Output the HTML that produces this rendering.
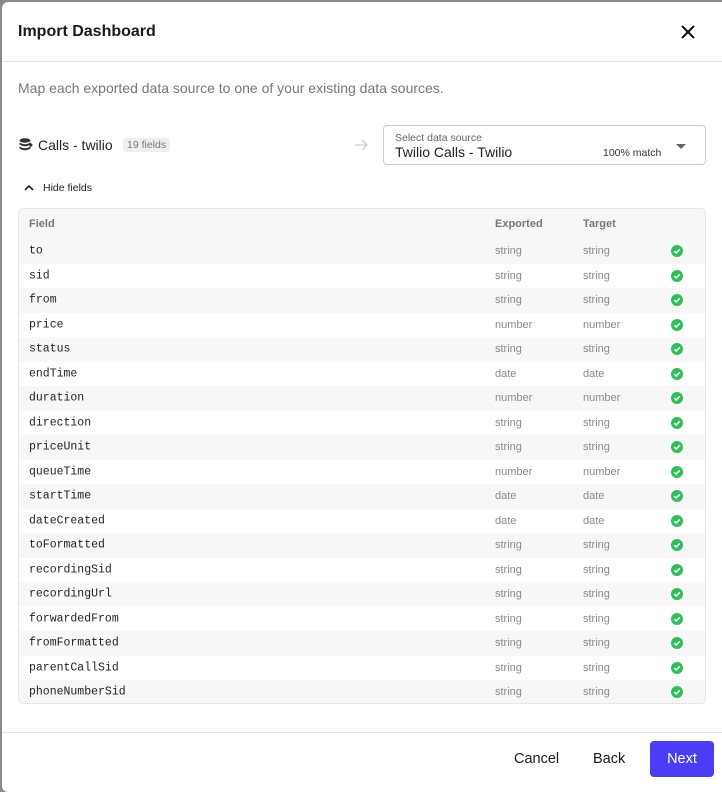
<!DOCTYPE html>
<html><head><style>
*{box-sizing:border-box;margin:0;padding:0}
body{width:722px;height:785px;background:#8a8a8a;font-family:"Liberation Sans",sans-serif;overflow:hidden;position:relative}
.modal{position:absolute;left:2px;top:2px;width:730px;height:790px;background:#fff;border-radius:6px}
.abs{position:absolute}
.tbl{position:absolute;left:16px;top:206px;width:688px;height:496px;background:#f7f7f8;border:1px solid #e6e6e9;border-radius:5px;overflow:hidden}
.row{height:24.5px;position:relative;font-size:11px;color:#8a8a8f}
.row.w{background:#fff}
.row span{position:absolute;top:50%;transform:translateY(-50%)}
.row .f{left:10px;color:#222;font-family:"Liberation Mono",monospace;font-size:11.5px}
.row .e{left:476px}.row .t{left:564px}
.chk{position:absolute;left:652px;top:50%;transform:translateY(-50%);width:12px;height:12px}
</style></head><body>
<div class="modal">
<div class="abs" style="left:16px;top:21px;font-size:16px;font-weight:bold;color:#1a1a1a">Import Dashboard</div>
<svg class="abs" style="left:679px;top:23px" width="14" height="14" viewBox="0 0 14 14"><path d="M1 1L13 13M13 1L1 13" stroke="#111" stroke-width="2"/></svg>
<div class="abs" style="left:0;top:59px;width:722px;height:1px;background:#e3e3e6"></div>
<div class="abs" style="left:16px;top:78px;font-size:14px;color:#777">Map each exported data source to one of your existing data sources.</div>
<svg class="abs" style="left:17px;top:136px" width="14" height="13" viewBox="0 0 14 13"><ellipse cx="6" cy="2.5" rx="5.5" ry="2.2" fill="#333"/><path d="M0.5 4.5Q6 8 11.5 4.5V6.5Q6 10 0.5 6.5Z M0.5 8.5Q6 12 11.5 8.5V10.5Q6 14 0.5 10.5Z" fill="#333"/><path d="M9 7h4M11 5l2 2-2 2" stroke="#333" stroke-width="1.3" fill="none"/></svg>
<div class="abs" style="left:36px;top:135px;font-size:14px;color:#222">Calls - twilio</div>
<div class="abs" style="left:121px;top:136px;font-size:10.5px;color:#777;background:#efeff1;padding:1px 4px;border-radius:3px">19 fields</div>
<svg class="abs" style="left:352px;top:137px" width="14" height="12" viewBox="0 0 14 12"><path d="M1 6h12M8 1l5 5-5 5" stroke="#ccc" stroke-width="1.3" fill="none"/></svg>
<div class="abs" style="left:381px;top:123px;width:323px;height:40px;border:1px solid #ccc;border-radius:4px">
<div class="abs" style="left:11px;top:6px;font-size:10.5px;color:#666">Select data source</div>
<div class="abs" style="left:11px;top:18px;font-size:14px;color:#222">Twilio Calls - Twilio</div>
<div class="abs" style="left:219px;top:21px;font-size:10.5px;color:#333">100% match</div>
<div class="abs" style="left:292px;top:18px;width:0;height:0;border-left:5px solid transparent;border-right:5px solid transparent;border-top:5px solid #666"></div>
</div>
<svg class="abs" style="left:22px;top:182px" width="10" height="7" viewBox="0 0 10 7"><path d="M1 6L5 2L9 6" stroke="#222" stroke-width="1.6" fill="none"/></svg>
<div class="abs" style="left:41px;top:180px;font-size:10.5px;color:#222">Hide fields</div>
<div class="tbl">
<div style="height:30px;position:relative;font-size:11px;color:#777;font-weight:bold">
<span class="abs" style="left:10px;top:9px">Field</span><span class="abs" style="left:476px;top:9px">Exported</span><span class="abs" style="left:564px;top:9px">Target</span></div>
<div id="rows"></div>
</div>
<div class="abs" style="left:0;top:730px;width:722px;height:1px;background:#e3e3e6"></div>
<div class="abs" style="left:512px;top:749px;font-size:14.5px;color:#1a1a1a">Cancel</div>
<div class="abs" style="left:591px;top:749px;font-size:14.5px;color:#1a1a1a">Back</div>
<div class="abs" style="left:648px;top:739px;width:64px;height:36px;background:#4b3cf5;border-radius:4px;color:#fff;font-size:14.5px;text-align:center;line-height:36px">Next</div>
</div>
<script>
var d=[["to","string"],["sid","string"],["from","string"],["price","number"],["status","string"],["endTime","date"],["duration","number"],["direction","string"],["priceUnit","string"],["queueTime","number"],["startTime","date"],["dateCreated","date"],["toFormatted","string"],["recordingSid","string"],["recordingUrl","string"],["forwardedFrom","string"],["fromFormatted","string"],["parentCallSid","string"],["phoneNumberSid","string"]];
var h="";d.forEach(function(r,i){h+='<div class="row'+(i%2?' w':'')+'"><span class="f">'+r[0]+'</span><span class="e">'+r[1]+'</span><span class="t">'+r[1]+'</span><svg class="chk" viewBox="0 0 12 12"><circle cx="6" cy="6" r="6" fill="#2fbf57"/><path d="M3.3 6.2l1.9 1.8 3.6-3.7" stroke="#fff" stroke-width="1.6" fill="none"/></svg></div>'});
document.getElementById("rows").innerHTML=h;
</script>
</body></html>
